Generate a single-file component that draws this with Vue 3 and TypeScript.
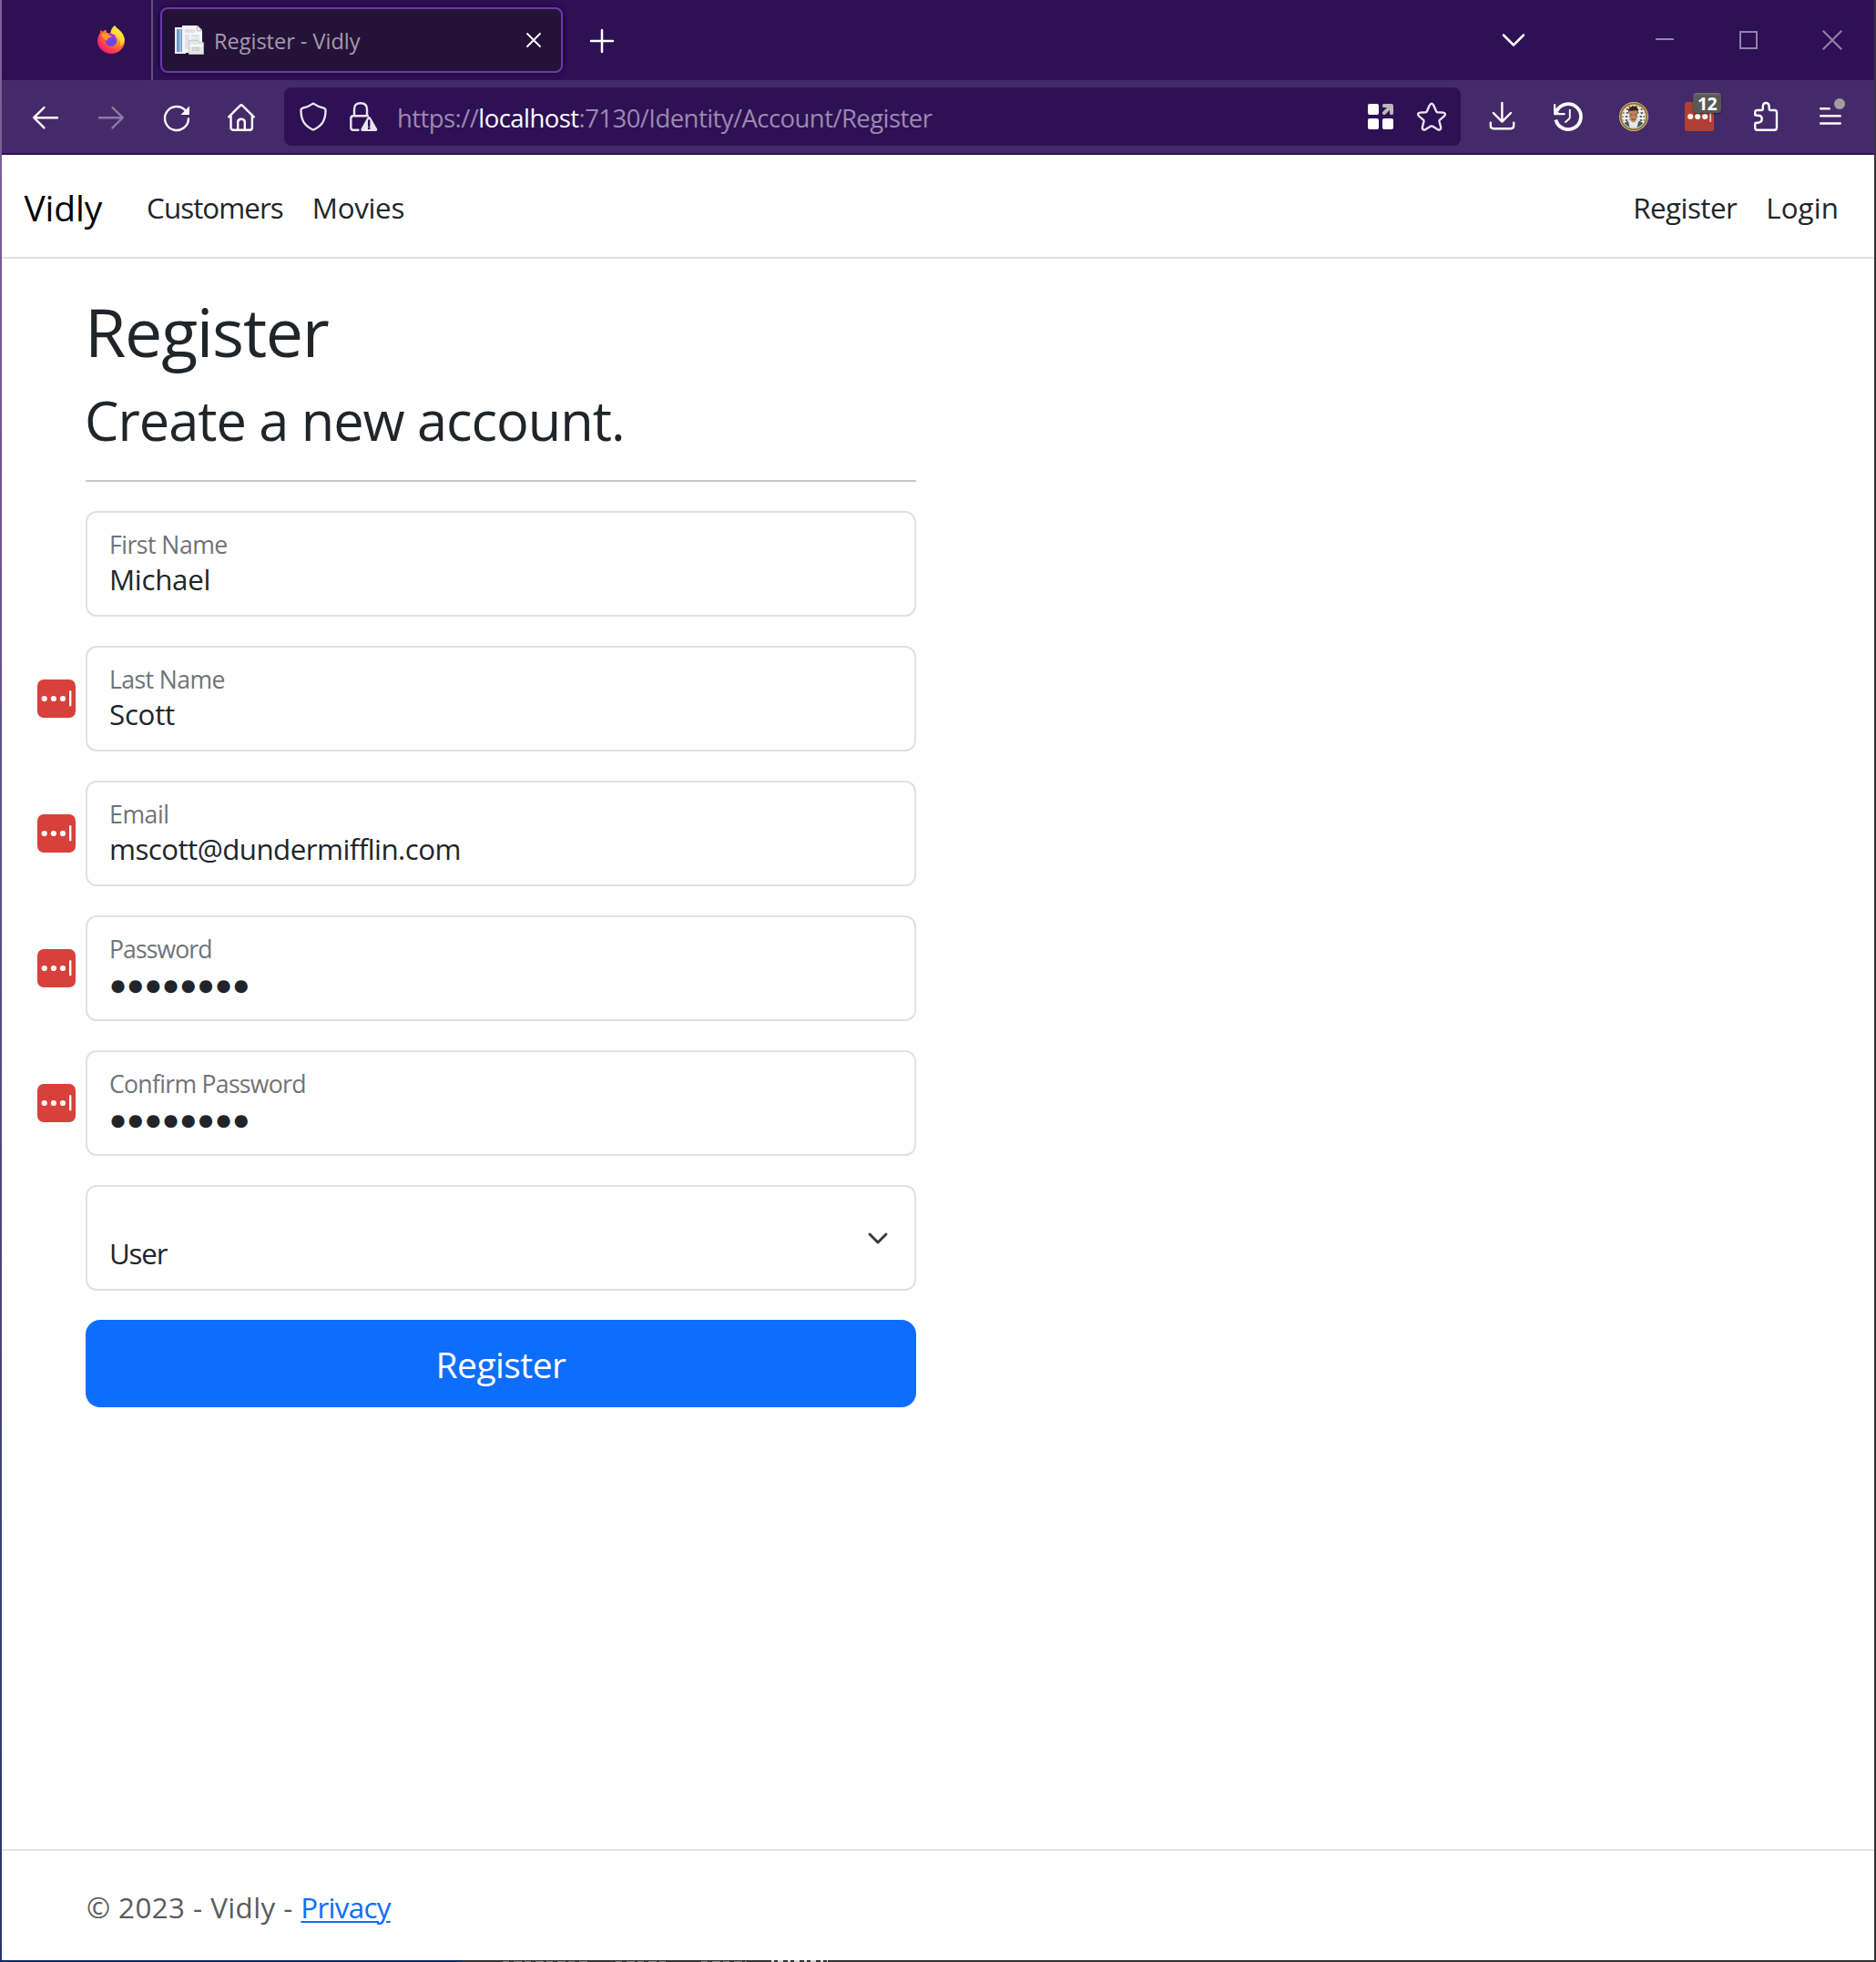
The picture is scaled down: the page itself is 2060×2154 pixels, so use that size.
<script setup lang="ts">
interface Field {
  id: string
  label: string
  value: string
  manager: boolean
  secret?: boolean
  labelSpacing: string
  valueSpacing: string
}

const fields: Field[] = [
  { id: 'first', label: 'First Name', value: 'Michael', manager: false, labelSpacing: '-0.5px', valueSpacing: '-0.3px' },
  { id: 'last', label: 'Last Name', value: 'Scott', manager: true, labelSpacing: '-0.57px', valueSpacing: '-0.28px' },
  { id: 'email', label: 'Email', value: 'mscott@dundermifflin.com', manager: true, labelSpacing: '-0.4px', valueSpacing: '-0.55px' },
  { id: 'password', label: 'Password', value: '●●●●●●●●', manager: true, secret: true, labelSpacing: '-0.9px', valueSpacing: '3.27px' },
  { id: 'confirm', label: 'Confirm Password', value: '●●●●●●●●', manager: true, secret: true, labelSpacing: '-0.7px', valueSpacing: '3.27px' },
]
</script>

<template>
  <div class="window">
    <div class="edge-left"></div>
    <div class="browser">
      <!-- Tab strip -->
      <div class="tabs">
        <div class="pinned">
          <svg class="fx" viewBox="0 0 30 31">
            <defs>
              <radialGradient id="fxBody" cx="0.8" cy="0.15" r="1">
                <stop offset="0" stop-color="#fff44f" />
                <stop offset="0.3" stop-color="#ffb82e" />
                <stop offset="0.55" stop-color="#ff7a2b" />
                <stop offset="0.8" stop-color="#ff3750" />
                <stop offset="1" stop-color="#e31587" />
              </radialGradient>
              <radialGradient id="fxGlobe" cx="0.55" cy="0.8" r="0.8">
                <stop offset="0" stop-color="#5b4fe0" />
                <stop offset="0.5" stop-color="#7a3fe0" />
                <stop offset="1" stop-color="#b833e1" />
              </radialGradient>
            </defs>
            <path fill="url(#fxBody)" d="M19 0c2 3 4.5 4 6 6 4 4 5 8 5 11 0 8-7 14-15 14S0 24.500 0 17c0-4 1.500-7 3-9l.5-3.500L6 7c1-1.500 2-2 3.500-2L10 8l4.500.5C14.500 5 16.500 2 19 0z" />
            <circle cx="15" cy="16.500" r="6.300" fill="url(#fxGlobe)" />
            <path fill="#9a35d8" d="M11 9c3-2 8-.5 9.500 3-2-1-3.500-1-5-.5z" />
            <path fill="#ff9a2b" d="M4 10c3-1.800 6-1 7.500 1h4c0 1.800-2.500 2.500-4 3-.5 1-1 1.800-.8 3-2.500-2-5.700-4-6.700-7z" />
            <path fill="#ffe13d" d="M19 0c2 3 4.500 4 6 6 3 3 4.500 6.500 4.700 9.500-.7 4-2.700 6-4.700 7 .8-5-.5-9-5-11.500-3-1.500-4.300-2-5.500-2.500C14.500 5 16.500 2 19 0z" opacity=".8" />
          </svg>
        </div>
        <div class="tab">
          <svg class="favicon" viewBox="0 0 32 32">
            <path fill="#e9eef4" d="M0 2h12v29H0z" />
            <path fill="#6f97cc" d="M2 4h8v25H2z" />
            <path fill="#9dbce3" d="M5 4h2v25H5z" />
            <path fill="#f5f5f5" d="M8 0h17l5 5v25H8z" />
            <path fill="#dfe1e4" d="M11 4h11v4H11zM11 10h5v16h-5zM18 10h9v3h-9zM18 14h9v2h-9z" />
            <path fill="#fff" stroke="#a5a5a5" stroke-width=".8" d="M24.500.5v5.200H30z" />
            <path fill="#e6e7e8" stroke="#bfc0c2" stroke-width=".8" d="M15.500 16.500H26v2h5.500v13h-16z" />
            <path fill="#f8f8f8" d="M16 21h15v2H16z" />
            <path fill="none" stroke="#c5c7ca" d="M19.500 24.500h7v3h-7zM22 24.500v3M24.500 24.500v3" />
          </svg>
          <span class="tab-title">Register - Vidly</span>
          <svg class="tab-close" viewBox="0 0 16 16"><path d="M1 1l14 14M15 1L1 15" /></svg>
        </div>
        <svg class="new-tab" viewBox="0 0 24 24"><path d="M12 0v24M0 12h24" /></svg>
        <div class="grow"></div>
        <svg class="list-tabs" viewBox="0 0 26 16"><path d="M2 2.500l11 11 11-11" /></svg>
        <div class="controls">
          <svg viewBox="0 0 22 22"><path d="M1 10h20" /></svg>
          <svg viewBox="0 0 22 22"><path d="M2 2h18v18H2z" /></svg>
          <svg viewBox="0 0 22 22"><path d="M.8.8l20.400 20.400M21.200.8L.8 21.200" /></svg>
        </div>
      </div>

      <!-- Navigation toolbar -->
      <div class="toolbar">
        <div class="tool"><svg viewBox="0 0 32 32"><path d="M29 17.200H3.500M14.500 6L3.200 17.200l11.300 11.200" /></svg></div>
        <div class="tool dim"><svg viewBox="0 0 32 32"><path d="M3 17.200h25.500M17.500 6l11.300 11.200-11.300 11.200" /></svg></div>
        <div class="tool">
          <svg viewBox="0 0 32 32">
            <path d="M29 18.500A13 13 0 1 1 25 8.600" />
            <path class="solid" d="M30 4.500V14h-9.500z" />
          </svg>
        </div>
        <div class="tool">
          <svg viewBox="0 0 32 32">
            <path d="M1.200 16.300L13.800 3.900q1.200-1.100 2.400 0l12.600 12.400M3.500 14.500V28q0 2.700 2.700 2.700h18q2.700 0 2.700-2.700V14.500M11.200 30.500V22q0-3.300 3.800-3.300t3.800 3.300v8.500" />
          </svg>
        </div>

        <div class="urlbar">
          <svg class="icon soft" viewBox="0 0 32 32">
            <path d="M14.600 2.400q1.400-1.200 2.800 0Q22 5.800 28 6.800q1.600.4 1.500 2C29.500 19 26.500 25.500 17.300 30q-1.300.8-2.600 0C5.500 25.500 2.500 19 2.500 8.800q-.1-1.600 1.500-2 6-1 10.600-4.400z" />
          </svg>
          <svg class="icon soft lock" viewBox="0 0 32 32">
            <path d="M5 14.500V8q0-6.700 7-6.700T19 8v6.500M9.500 30.700H4q-2.700 0-2.700-2.700V18q0-2.700 2.700-2.700h16" />
            <path class="solid" d="M19.500 17q1.800-2.200 3.500 0l7 12.500q.8 2.300-1.500 2.500H14q-2.300-.2-1.500-2.500z" />
            <path class="mark" d="M21.200 20.500v5.500M21.200 28.500v.4" />
          </svg>
          <span class="url">https://<b>localhost</b>:7130/Identity/Account/Register</span>
          <svg class="icon" viewBox="0 0 32 32">
            <g fill="#fff" stroke="none">
              <rect x="2" y="2" width="12" height="12" rx="2" />
              <rect x="2" y="18" width="12" height="12" rx="2" />
              <rect x="18" y="18" width="12" height="12" rx="2" />
            </g>
            <path class="arrow" d="M19.800 4h8.200v8.200M20 12L27 5" />
          </svg>
          <svg class="icon soft star" viewBox="0 0 32 32">
            <path d="M13.700 3.800q2.300-4 4.600 0l2.800 6.400q.4.900 1.400 1l6.200.4q3.700.8 1.300 3.700l-5 4.300q-.7.700-.5 1.600l1.600 6.300q.4 4-3.200 2.800l-6-3.700q-.9-.5-1.800 0l-6 3.700q-3.600 1.200-3.200-2.800l1.600-6.300q.2-.9-.5-1.600l-5-4.300q-2.400-2.900 1.300-3.700l6.200-.4q1-.1 1.400-1z" />
          </svg>
        </div>

        <div class="tool"><svg viewBox="0 0 32 32"><path d="M15.400 1v20.300M5.800 12l9.600 9.600L25 12M2.800 22.800V26q0 3.200 3.200 3.200h19q3.200 0 3.200-3.200v-3.200" /></svg></div>
        <div class="tool">
          <svg viewBox="0 0 32 32">
            <path stroke-width="3.800" stroke-linecap="butt" d="M2.400 19.600A14 14 0 1 0 3.600 9.500" />
            <path stroke-width="2.200" d="M1.200 3.200v10h10.500" />
            <path stroke-width="1.900" d="M17.800 8.800v7.700q0 1.200-.8 2L13 22" />
            <path class="solid" d="M1 6v7.300h6z" />
          </svg>
        </div>
        <div class="tool">
          <svg viewBox="0 0 32 32" class="avatar">
            <defs><clipPath id="face"><circle cx="16" cy="16" r="12.500" /></clipPath></defs>
            <circle cx="16" cy="16" r="16" fill="#e3c884" />
            <circle cx="16" cy="16" r="14.300" fill="none" stroke="#8a6c33" stroke-width="1.800" stroke-dasharray="2.200 1.300" />
            <g clip-path="url(#face)" stroke-linecap="butt">
              <rect width="32" height="32" fill="#eef0ee" />
              <path fill="none" stroke="#34383a" stroke-width="1.700" stroke-dasharray="1.500 2.300 2.500 1.600" d="M4 8h24M4 12h24M3 16h26M3 20h26M6 5h20" />
              <path fill="#35597a" d="M2 32q1-10 8-11l6 4 6-4q6 1 8 11z" />
              <path fill="#e9e8df" d="M10 21l2-2h8l1 3-2 8h-7z" />
              <path fill="#bd8560" d="M11 10q4-4 9 0v6q-1 6-4.500 6.500Q12 21.500 11 16z" />
              <path fill="#3a2419" d="M10 12q-1-7 6-7.500 6 .5 4.500 8.500-.5-3-2-4-4 1-7 .5z" />
              <path fill="#6b4431" d="M12.500 13.500h2v1h-2zM17 13.500h2v1h-2zM13.500 18.500h4v1h-4z" />
            </g>
          </svg>
        </div>
        <div class="tool ext">
          <svg viewBox="0 0 32 32">
            <rect class="ext-bg" width="32" height="32" rx="2.500" />
            <g fill="#fff" stroke="none">
              <circle cx="6.200" cy="16" r="3" /><circle cx="14.200" cy="16" r="3" /><circle cx="22.200" cy="16" r="3" />
              <rect x="27.300" y="10" width="1.800" height="12" opacity=".7" />
            </g>
          </svg>
          <span class="count">12</span>
        </div>
        <div class="tool">
          <svg viewBox="0 0 32 32">
            <path d="M5.200 13.500V11.500Q5.200 9 7.700 9H12q1.800 0 1.800-1.800V4.500q.3-3.500 3.400-3.500t3.400 3.500v2.700Q20.600 9 22.400 9h4.200Q29 9 29 11.500v16.700q0 2.500-2.500 2.500H7.700q-2.500 0-2.500-2.500v-3.700q0-1.800 1.800-1.800h1.500q4.200-.5 4.200-4.200T8.500 14.800H6.500q-1.300 0-1.300-1.300z" />
          </svg>
        </div>
        <div class="tool">
          <svg viewBox="0 0 32 32">
            <path d="M5.200 7.200h9.500M5.200 15.200h21.500M5.200 23.500h21.500" />
            <circle cx="26" cy="2" r="6" fill="#a09f9f" stroke="none" />
          </svg>
        </div>
      </div>

      <!-- Page -->
      <div class="page">
        <nav class="navbar">
          <a class="brand">Vidly</a>
          <a class="link customers">Customers</a>
          <a class="link movies">Movies</a>
          <div class="grow"></div>
          <a class="link register">Register</a>
          <a class="link login">Login</a>
        </nav>

        <main class="content">
          <h1>Register</h1>
          <h2>Create a new account.</h2>
          <hr />
          <div v-for="f in fields" :key="f.id" class="row">
            <svg class="manager" :class="{ hidden: !f.manager }" viewBox="0 0 42 42">
              <rect width="42" height="42" rx="7" fill="#d8403b" />
              <g fill="#fff">
                <circle cx="7.700" cy="21" r="3.100" /><circle cx="17.900" cy="21" r="3.100" /><circle cx="28" cy="21" r="3.100" />
                <rect x="35" y="12.300" width="2.400" height="17" rx=".6" />
              </g>
            </svg>
            <div class="field">
              <span class="label" :style="{ letterSpacing: f.labelSpacing }">{{ f.label }}</span>
              <span class="value" :class="{ secret: f.secret }" :style="{ letterSpacing: f.valueSpacing }">{{ f.value }}</span>
            </div>
          </div>
          <div class="row">
            <div class="manager"></div>
            <div class="field select">
              <span class="value user">User</span>
              <svg class="caret" viewBox="0 0 22 14"><path d="M2 2l9 9 9-9" /></svg>
            </div>
          </div>
          <button class="submit" type="button">Register</button>
        </main>

        <footer class="footer"><span class="copy">© 2023 - Vidly - </span><a class="privacy">Privacy</a></footer>
      </div>
    </div>
    <div class="edge-right"></div>
    <svg class="edge-bottom" viewBox="0 0 2060 2" preserveAspectRatio="none">
      <rect width="508" height="2" fill="#0d2a66" />
      <rect x="508" width="1552" height="2" fill="#303030" />
      <path d="M552 1.500h96M676 1.500h56M770 1.500h50" stroke="#8a8a8a" stroke-width="1" stroke-dasharray="7 5 9 3" />
      <path d="M847 1h62" stroke="#d8d8d8" stroke-width="2" stroke-dasharray="3 4 6 5" />
    </svg>
  </div>
</template>

<style>
body {
  margin: 0;
  background: #fff;
}
</style>

<style scoped>
.window {
  display: grid;
  grid-template-columns: 2px 1fr 2px;
  grid-template-rows: 2152px 2px;
  width: 2060px;
  height: 2154px;
  overflow: hidden;
  font-family: 'Open Sans', 'Noto Sans', sans-serif;
  color: #212529;
}
.edge-left {
  background: linear-gradient(#82609f, #6c5590 25%, #5a4f86 45%, #4c4675 65%, #24376c);
}
.edge-right {
  background: #363636;
}
.edge-bottom {
  grid-column: 1 / 4;
  width: 2060px;
  height: 2px;
  display: block;
}
.browser {
  display: flex;
  flex-direction: column;
}
.grow {
  flex: 1;
}
svg {
  flex: none;
  overflow: visible;
}

.tabs {
  display: flex;
  align-items: center;
  height: 88px;
  background: #2e1055;
}
.pinned {
  box-sizing: border-box;
  width: 166px;
  height: 88px;
  padding: 28px 0 0 105px;
  border-right: 2px solid #644c80;
}
.fx {
  display: block;
  width: 30px;
  height: 31px;
}
.tab {
  box-sizing: border-box;
  display: flex;
  align-items: center;
  width: 442px;
  height: 72px;
  margin-left: 8px;
  padding: 0 22px 0 14px;
  border: 2px solid #6c3aab;
  border-radius: 8px;
  background: #251238;
  box-shadow: 0 0 6px rgba(10, 0, 25, 0.6);
}
.favicon {
  width: 32px;
  height: 32px;
}
.tab-title {
  flex: 1;
  margin-left: 11px;
  padding-top: 2px;
  font-size: 23.5px;
  line-height: 32px;
  color: #a69cb0;
}
.tab-close {
  width: 16px;
  height: 16px;
}
.tab-close path,
.new-tab path,
.list-tabs path {
  fill: none;
  stroke: #fff;
  stroke-width: 1.8;
  stroke-linecap: round;
  stroke-linejoin: round;
}
.new-tab {
  width: 24px;
  height: 24px;
  margin: 2px 0 0 31px;
}
.new-tab path,
.list-tabs path {
  stroke-width: 2.5;
}
.list-tabs {
  width: 26px;
  height: 16px;
  margin-right: 142px;
}
.controls {
  display: flex;
  gap: 70px;
  margin-right: 35px;
}
.controls svg {
  width: 22px;
  height: 22px;
}
.controls path {
  fill: none;
  stroke: #9583ab;
  stroke-width: 2;
}

.toolbar {
  box-sizing: border-box;
  display: flex;
  align-items: center;
  height: 82px;
  padding: 0 12px;
  border-bottom: 2px solid #2e1055;
  background: #452a69;
}
.tool {
  display: flex;
  align-items: center;
  justify-content: center;
  width: 72px;
  height: 64px;
}
.tool svg,
.icon {
  width: 32px;
  height: 32px;
  fill: none;
  stroke: #fff;
  stroke-width: 2.4;
  stroke-linecap: round;
  stroke-linejoin: round;
}
.solid {
  fill: #fff;
  stroke: none;
}
.dim path {
  stroke: #8d7aa5;
}
.soft path {
  stroke: #e8e4ec;
}
.soft .solid {
  fill: #e8e4ec;
  stroke: none;
}
.icon .mark {
  stroke: #2e1055;
}
.icon .arrow {
  stroke: #bab8bc;
  stroke-width: 4;
}
.tool .avatar {
  stroke: none;
}
.ext {
  position: relative;
}
.ext-bg {
  fill: #b04034;
  stroke: none;
}
.count {
  position: absolute;
  left: 29px;
  top: 6px;
  width: 31px;
  height: 22px;
  border-radius: 4px;
  background: linear-gradient(#747474, #585858 3px);
  color: #fff;
  font-size: 19.5px;
  font-weight: 700;
  line-height: 24px;
  letter-spacing: -0.6px;
  text-align: center;
  box-shadow: 0 1px 2px rgba(0, 0, 0, 0.5);
}
.urlbar {
  box-sizing: border-box;
  display: flex;
  align-items: center;
  flex: 1;
  height: 64px;
  margin: 0 10px;
  padding: 0 16px;
  border-radius: 8px;
  background: #2e1055;
}
.lock {
  margin-left: 24px;
}
.star {
  margin-left: 24px;
}
.url {
  flex: 1;
  margin-left: 20px;
  padding-top: 3px;
  font-size: 27.5px;
  line-height: 36px;
  letter-spacing: -0.56px;
  color: #9a8aad;
}
.url b {
  font-weight: 400;
  color: #fff;
}

.page {
  display: flex;
  flex-direction: column;
  flex: 1;
  background: #fff;
}
.navbar {
  box-sizing: border-box;
  display: flex;
  align-items: center;
  height: 114px;
  padding: 4px 39px 0 24.5px;
  border-bottom: 2px solid #dee2e6;
}
.brand {
  font-size: 39px;
  line-height: 60px;
  letter-spacing: -0.15px;
  color: #000;
}
.link {
  font-size: 31.3px;
  line-height: 48px;
}
.customers {
  margin-left: 49px;
  letter-spacing: -0.93px;
}
.movies {
  margin-left: 32px;
  letter-spacing: -0.3px;
}
.register {
  letter-spacing: -0.53px;
}
.login {
  margin-left: 32px;
  letter-spacing: 0.1px;
}

.content {
  flex: 1;
  width: 965px;
  padding: 35px 0 0 39px;
}
h1,
h2 {
  margin: 0;
  font-weight: 400;
}
h1 {
  margin: 0 0 15px 52px;
  font-size: 73.5px;
  line-height: 90px;
  letter-spacing: -1.25px;
}
h2 {
  margin-left: 52px;
  font-size: 59.5px;
  line-height: 73px;
  letter-spacing: -1.02px;
}
hr {
  height: 2px;
  margin: 30px 0 32px 53px;
  border: 0;
  background: #c7c8c9;
}
.row {
  display: flex;
  align-items: center;
  gap: 11px;
  margin-bottom: 32px;
}
.manager {
  flex: none;
  width: 42px;
  height: 42px;
}
.hidden {
  visibility: hidden;
}
.field {
  box-sizing: border-box;
  display: flex;
  flex-direction: column;
  flex: 1;
  height: 116px;
  padding: 15px 23px 0 24px;
  border: 2px solid #dee2e6;
  border-radius: 12px;
}
.label {
  font-size: 26.6px;
  line-height: 40px;
  color: #707376;
}
.value {
  font-size: 31.3px;
  line-height: 36px;
}
.secret {
  padding: 1.5px 0 0 1.500px;
  font-family: 'DejaVu Sans', sans-serif;
  font-size: 18.4px;
}
.select {
  flex-direction: row;
  justify-content: space-between;
  padding: 0 29px 0 24px;
}
.user {
  padding-top: 55px;
  letter-spacing: -1.2px;
}
.caret {
  width: 22px;
  height: 14px;
  margin-top: 49.5px;
}
.caret path {
  fill: none;
  stroke: #343a40;
  stroke-width: 2.9;
  stroke-linecap: round;
  stroke-linejoin: round;
}
.submit {
  display: block;
  width: 912px;
  height: 96px;
  margin-left: 53px;
  padding: 2px 0 0;
  border: 0;
  border-radius: 16px;
  background: #0d6efd;
  color: #fff;
  font: 39px/60px 'Open Sans', 'Noto Sans', sans-serif;
  letter-spacing: -0.55px;
}

.footer {
  height: 120px;
  padding: 2px 0 0 93px;
  box-sizing: content-box;
  margin-bottom: -2px;
  border-top: 2px solid #dee2e6;
  font-size: 31.3px;
  line-height: 120px;
  color: #595c5f;
}
.copy {
  white-space: pre;
  letter-spacing: 0.45px;
}
.privacy {
  color: #0d6efd;
  letter-spacing: -0.7px;
  text-decoration: underline;
  text-decoration-thickness: 2px;
  text-underline-offset: 3px;
}
</style>
